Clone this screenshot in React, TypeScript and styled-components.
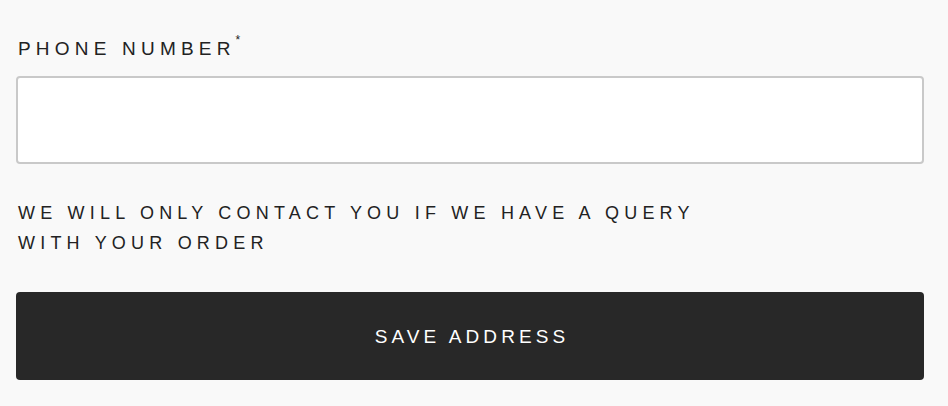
import React from "react";
import styled, { createGlobalStyle } from "styled-components";

const GlobalStyle = createGlobalStyle`
  html, body {
    margin: 0;
    padding: 0;
    background: #f9f9f9;
  }
  body {
    font-family: "Liberation Sans", Arial, sans-serif;
    color: #222222;
  }
`;

const Form = styled.form`
  display: flex;
  flex-direction: column;
  padding: 37px 24px 26px 16px;
`;

const Label = styled.label`
  display: flex;
  align-items: flex-start;
  margin-left: 2px;
  font-size: 19px;
  line-height: 24px;
  letter-spacing: 5.2px;
  text-transform: uppercase;
  color: #222222;
`;

const Required = styled.span`
  display: block;
  font-size: 12px;
  line-height: 12px;
  letter-spacing: 0;
  margin-top: -3px;
`;

const Input = styled.input`
  box-sizing: border-box;
  margin-top: 15px;
  width: 100%;
  height: 88px;
  border: 2px solid #c9c9c9;
  border-radius: 4px;
  background: #ffffff;
  padding: 0 16px;
  font-family: inherit;
  font-size: 18px;
  outline: none;
`;

const Helper = styled.p`
  margin: 34px 0 0 2px;
  max-width: 710px;
  font-size: 18px;
  line-height: 30px;
  letter-spacing: 5.2px;
  text-transform: uppercase;
  color: #222222;
`;

const Button = styled.button`
  margin-top: 34px;
  height: 88px;
  width: 100%;
  display: flex;
  align-items: center;
  justify-content: center;
  border: none;
  border-radius: 4px;
  background: #282828;
  color: #ffffff;
  font-family: inherit;
  font-size: 19px;
  letter-spacing: 4.1px;
  text-transform: uppercase;
  cursor: pointer;
  padding: 2px 0 0 4px;
`;

export default function App() {
  return (
    <>
      <GlobalStyle />
      <Form onSubmit={(e) => e.preventDefault()}>
        <Label htmlFor="phone">
          <span>Phone Number</span>
          <Required>*</Required>
        </Label>
        <Input id="phone" type="tel" />
        <Helper>We will only contact you if we have a query with your order</Helper>
        <Button type="submit">Save Address</Button>
      </Form>
    </>
  );
}
